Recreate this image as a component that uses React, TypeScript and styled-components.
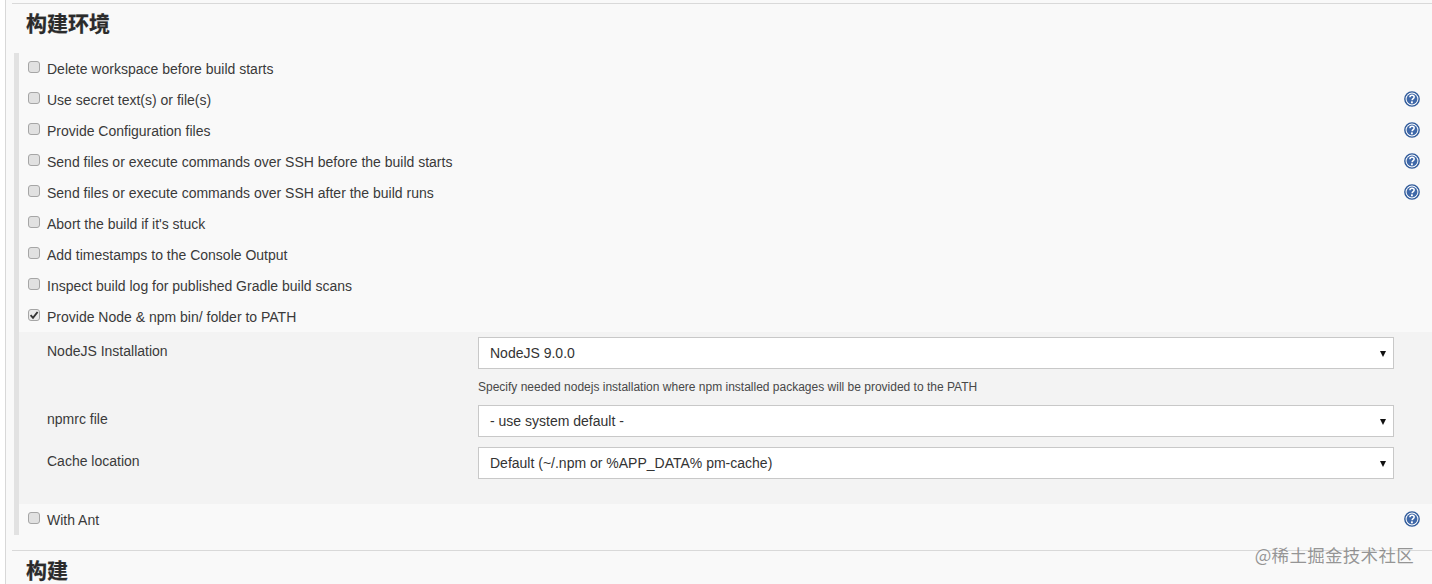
import React from "react";
import styled, { createGlobalStyle } from "styled-components";

const Global = createGlobalStyle`
  html, body { margin: 0; padding: 0; background: #fff; }
  body { font-family: "Liberation Sans", Arial, "Noto Sans CJK SC", sans-serif; color: #333; overflow: hidden; }
`;

const Page = styled.div`
  height: 584px;
  overflow: hidden;
  position: relative;
  box-sizing: border-box;
  margin-left: 5px;
  width: 1427px;
  border-left: 1px solid #d8d8d8;
  background: #f9f9f9;
  padding: 3px 0 0 6px;
`;
const Rule = styled.div`
  height: 1px;
  background: #d9d9d9;
`;
const Title = styled.h2`
  margin: 0;
  padding-left: 14px;
  height: 39px;
  font: bold 21px/40px "Liberation Sans", "Noto Sans CJK SC", sans-serif;
  color: #2b2b2b;
  -webkit-text-stroke: 0.25px #2b2b2b;
`;
const Section = styled.div`
  margin: 10px 0 15px 2px;
  border-left: 5px solid #e2e2e2;
`;
const Row = styled.div`
  display: flex;
  align-items: center;
  height: 31px;
  padding-left: 9px;
  padding-right: 12px;
`;
const Check = styled.span<{ $checked?: boolean }>`
  width: 12px;
  height: 12px;
  flex: none;
  box-sizing: border-box;
  border: 1px solid #a6a6a6;
  border-radius: 3px;
  background: ${(p) => (p.$checked ? "#e9e9e9" : "#e1e1e1")};
  margin-top: -4px;
  display: flex;
  align-items: center;
  justify-content: center;
`;
const Label = styled.label`
  margin-left: 7px;
  font-size: 14px;
  color: #3a3a3a;
  flex: 1;
  white-space: nowrap;
`;
const Help = styled.svg`
  width: 16px;
  height: 16px;
  flex: none;
  margin-top: -2px;
`;
const Panel = styled.div`
  background: #f3f3f3;
  height: 172px;
  box-sizing: border-box;
  padding: 5px 38px 0 28px;
  display: grid;
  grid-template-columns: 431px 916px;
  grid-auto-rows: min-content;
`;
const FieldLabel = styled.div`
  font-size: 14px;
  color: #3a3a3a;
  padding-top: 6px;
`;
const SelectBox = styled.div`
  position: relative;
  height: 32px;
  box-sizing: border-box;
  border: 1px solid #c8c8c8;
  background: #fff;
  padding: 0 11px;
  font-size: 14px;
  line-height: 31px;
  color: #333;
  &::after {
    content: "";
    position: absolute;
    right: 7px;
    top: 13px;
    border-left: 3px solid transparent;
    border-right: 3px solid transparent;
    border-top: 6px solid #111;
  }
`;
const Hint = styled.div`
  grid-column: 2;
  height: 36px;
  font-size: 12px;
  line-height: 36px;
  color: #484848;
  white-space: nowrap;
`;
const Spacer = styled.div<{ $h: number }>`
  grid-column: 1 / -1;
  height: ${(p) => p.$h}px;
`;
const Watermark = styled.div`
  position: absolute;
  right: 18px;
  top: 544px;
  font-size: 17.5px;
  line-height: 22px;
  color: rgba(110, 110, 110, 0.72);
  letter-spacing: 0.3px;
  font-family: "Noto Sans CJK SC", "Liberation Sans", sans-serif;
`;

const HelpIcon = () => (
  <Help viewBox="0 0 17 17">
    <circle cx="8.5" cy="8.5" r="7.6" fill="#fff" stroke="#2f5a9a" strokeWidth="1.5" />
    <circle cx="8.5" cy="8.5" r="5.8" fill="#3f68a8" />
    <path d="M6.3 6.7c0-1.3 1-2.1 2.3-2.1s2.2.8 2.2 1.9c0 1.7-2.2 1.7-2.2 3.4" fill="none" stroke="#fff" strokeWidth="1.6" />
    <rect x="7.4" y="11" width="2" height="2" fill="#fff" />
  </Help>
);

const CheckBox = ({ checked }: { checked?: boolean }) => (
  <Check $checked={checked}>
    {checked && (
      <svg width="10" height="10" viewBox="0 0 10 10">
        <path d="M1.6 5.2 4 7.8 8.6 2" fill="none" stroke="#333" strokeWidth="1.9" />
      </svg>
    )}
  </Check>
);

const rows: [string, boolean, boolean][] = [
  ["Delete workspace before build starts", false, false],
  ["Use secret text(s) or file(s)", false, true],
  ["Provide Configuration files", false, true],
  ["Send files or execute commands over SSH before the build starts", false, true],
  ["Send files or execute commands over SSH after the build runs", false, true],
  ["Abort the build if it's stuck", false, false],
  ["Add timestamps to the Console Output", false, false],
  ["Inspect build log for published Gradle build scans", false, false],
  ["Provide Node & npm bin/ folder to PATH", true, false],
];

export default function App() {
  return (
    <Page>
      <Global />
      <Rule />
      <Title>构建环境</Title>
      <Section>
        {rows.map(([t, c, h]) => (
          <Row key={t}>
            <CheckBox checked={c} />
            <Label>{t}</Label>
            {h && <HelpIcon />}
          </Row>
        ))}
        <Panel>
          <FieldLabel>NodeJS Installation</FieldLabel>
          <SelectBox>NodeJS 9.0.0</SelectBox>
          <Hint>Specify needed nodejs installation where npm installed packages will be provided to the PATH</Hint>
          <FieldLabel>npmrc file</FieldLabel>
          <SelectBox>- use system default -</SelectBox>
          <Spacer $h={10} />
          <FieldLabel>Cache location</FieldLabel>
          <SelectBox>Default (~/.npm or %APP_DATA% pm-cache)</SelectBox>
        </Panel>
        <Row>
          <CheckBox />
          <Label>With Ant</Label>
          <HelpIcon />
        </Row>
      </Section>
      <Rule />
      <Title>构建</Title>
      <Watermark>@稀土掘金技术社区</Watermark>
    </Page>
  );
}
